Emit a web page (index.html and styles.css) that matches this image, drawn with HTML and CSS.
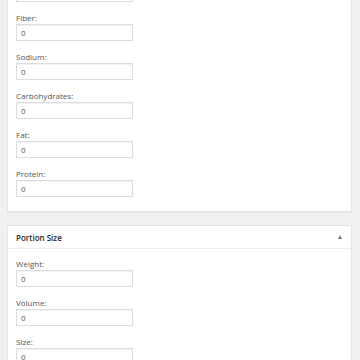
FILE: index.html
```html
<!DOCTYPE html>
<html lang="en">
<head>
  <meta charset="UTF-8" />
  <meta name="viewport" content="width=device-width, initial-scale=1.0"/>
  <title>Nutrition Facts</title>
  <link rel="stylesheet" href="styles.css">
</head>
<body>
  <div class="postbox nutrition">
    <div class="inside">
      <div class="field">
        <input type="text" id="sugar" aria-label="Sugar">
      </div>
      <div class="field">
        <label for="fiber">Fiber:</label>
        <input type="text" id="fiber" value="0">
      </div>
      <div class="field">
        <label for="sodium">Sodium:</label>
        <input type="text" id="sodium" value="0">
      </div>
      <div class="field">
        <label for="carbs">Carbohydrates:</label>
        <input type="text" id="carbs" value="0">
      </div>
      <div class="field">
        <label for="fat">Fat:</label>
        <input type="text" id="fat" value="0">
      </div>
      <div class="field">
        <label for="protein">Protein:</label>
        <input type="text" id="protein" value="0">
      </div>
    </div>
  </div>

  <div class="postbox">
    <div class="hndle">
      <span>Portion Size</span>
      <span class="toggle"></span>
    </div>
    <div class="inside">
      <div class="field">
        <label for="weight">Weight:</label>
        <input type="text" id="weight" value="0">
      </div>
      <div class="field">
        <label for="volume">Volume:</label>
        <input type="text" id="volume" value="0">
      </div>
      <div class="field">
        <label for="size">Size:</label>
        <input type="text" id="size" value="0">
      </div>
    </div>
  </div>
</body>
</html>
```

FILE: styles.css
```css
* {
  box-sizing: border-box;
  margin: 0;
  padding: 0;
}

body {
  background: #f1f1f1;
  font-family: 'Open Sans', sans-serif;
  color: #444;
  padding: 0 8px 0 7px;
  overflow: hidden;
}

.postbox {
  background: #fff;
  border: 1px solid #e5e5e5;
  box-shadow: 0 1px 1px rgba(0,0,0,0.04);
  margin-bottom: 13px;
}

/* first box is scrolled, only its tail shows */
.nutrition {
  margin-top: -26px;
}

.inside {
  padding: 10px 8px 3px;
}

.field {
  margin-bottom: 11px;
}

.field label {
  display: block;
  font-size: 8px;
  line-height: 10px;
  color: #555;
  margin-bottom: 1px;
}

.field input {
  display: block;
  width: 117px;
  height: 17px;
  border: 1px solid #ddd;
  box-shadow: inset 0 1px 1px rgba(0,0,0,0.06);
  font-family: 'Open Sans', sans-serif;
  font-size: 8px;
  color: #555;
  padding: 0 4px;
  outline: none;
}

.hndle {
  display: flex;
  justify-content: space-between;
  align-items: center;
  height: 23px;
  padding: 0 9px 0 8px;
  border-bottom: 1px solid #eee;
  font-size: 8px;
  font-weight: 600;
  color: #23282d;
}

.toggle {
  width: 0;
  height: 0;
  border-left: 2.5px solid transparent;
  border-right: 2.5px solid transparent;
  border-bottom: 4px solid #72777c;
  margin-bottom: 1px;
}
```
